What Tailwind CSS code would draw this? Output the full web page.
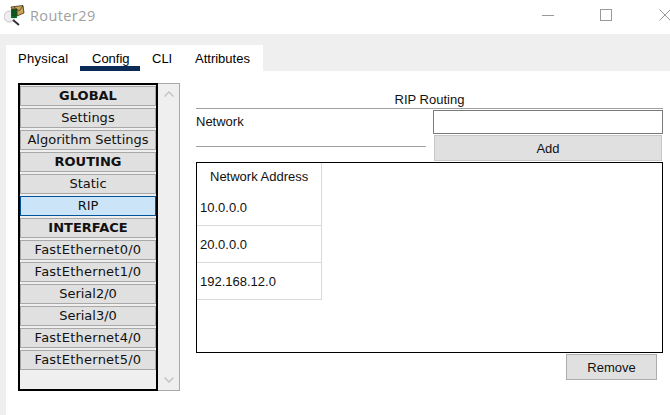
<!DOCTYPE html>
<html lang="en">
<head>
    <meta charset="UTF-8">
    <title>Router29</title>
    <script src="https://cdn.jsdelivr.net/npm/@tailwindcss/browser@4"></script>
</head>
<body class="bg-white w-[670px] h-[415px] overflow-hidden font-['Liberation_Sans',sans-serif] text-[13px] text-black">

    <!-- Title bar -->
    <div class="h-[34px] pb-[4px] flex items-center bg-white">
        <svg class="ml-[4px] w-[22px] h-[24px]" viewBox="0 0 22 24">
            <circle cx="5.500" cy="13.500" r="5.500" fill="#eeeeee" stroke="#c4c4c4"/>
            <path d="M9 17 L15 22" stroke="#333" stroke-width="2"/>
            <rect x="7" y="6" width="6" height="9" fill="#0f7a2c"/>
            <path d="M7 8h6M7 10h6M7 12h6M9 6v9M11 6v9" stroke="#0a3d16" stroke-width="0.700"/>
            <path d="M7 4 L19 2.500 L20 10 L13 13 L13 6 L8 6 Z" fill="#c9a55a" stroke="#3a2c10" stroke-width="0.800"/>
            <path d="M10 4 L15 8 L19 3" stroke="#3a2c10" stroke-width="0.700" fill="none"/>
        </svg>
        <span class="ml-[4px] mt-[1px] font-['Open_Sans',sans-serif] text-[14.500px] tracking-[0.4px] text-[#a0a0a0]">Router29</span>
        <div class="ml-auto flex items-center">
            <div class="w-[12px] h-px bg-[#999]"></div>
            <div class="ml-[46px] w-[12px] h-[12px] border border-[#999]"></div>
            <svg class="ml-[47px] w-[12px] h-[12px] mr-[-1px]" viewBox="0 0 12 12"><path d="M0.500 0.500 L11.500 11.500 M11.500 0.500 L0.500 11.500" stroke="#999" fill="none"/></svg>
        </div>
    </div>

    <div class="bg-[#efefef] pt-[11px] pl-[6px] h-[381px]">
        <!-- Tabs -->
        <div class="bg-white w-[257px] h-[26px] pt-[1px] flex items-center relative">
            <span class="ml-[12px] w-[74px] tracking-[0.25px]">Physical</span>
            <span class="w-[60px]">Config</span>
            <span class="w-[43px]">CLI</span>
            <span>Attributes</span>
            <div class="absolute left-[74px] top-[21px] w-[60px] h-[5px] bg-[#0b2a55]"></div>
        </div>

        <div class="bg-white h-[344px] flex">
            <!-- Side list -->
            <div class="ml-[12px] mt-[12px] w-[162px] h-[308px] flex">
                <div class="w-[140px] h-full border-2 border-black bg-[#efefef] pt-[1px] font-['DejaVu_Sans',sans-serif] text-[13px] text-[#111] flex flex-col gap-[2px]">
                    <div class="w-[136px] h-[20px] shrink-0 flex items-center justify-center bg-[#e0e0e0] border border-[#a8a8a8] font-bold">GLOBAL</div>
                    <div class="w-[136px] h-[20px] shrink-0 flex items-center justify-center bg-[#e0e0e0] border border-[#a8a8a8]">Settings</div>
                    <div class="w-[136px] h-[20px] shrink-0 flex items-center justify-center bg-[#e0e0e0] border border-[#a8a8a8]">Algorithm Settings</div>
                    <div class="w-[136px] h-[20px] shrink-0 flex items-center justify-center bg-[#e0e0e0] border border-[#a8a8a8] font-bold">ROUTING</div>
                    <div class="w-[136px] h-[20px] shrink-0 flex items-center justify-center bg-[#e0e0e0] border border-[#a8a8a8]">Static</div>
                    <div class="w-[136px] h-[20px] shrink-0 flex items-center justify-center bg-[#cce4f7] border border-[#005499]">RIP</div>
                    <div class="w-[136px] h-[20px] shrink-0 flex items-center justify-center bg-[#e0e0e0] border border-[#a8a8a8] font-bold">INTERFACE</div>
                    <div class="w-[136px] h-[20px] shrink-0 flex items-center justify-center bg-[#e0e0e0] border border-[#a8a8a8] tracking-[0.25px]">FastEthernet0/0</div>
                    <div class="w-[136px] h-[20px] shrink-0 flex items-center justify-center bg-[#e0e0e0] border border-[#a8a8a8] tracking-[0.25px]">FastEthernet1/0</div>
                    <div class="w-[136px] h-[20px] shrink-0 flex items-center justify-center bg-[#e0e0e0] border border-[#a8a8a8]">Serial2/0</div>
                    <div class="w-[136px] h-[20px] shrink-0 flex items-center justify-center bg-[#e0e0e0] border border-[#a8a8a8]">Serial3/0</div>
                    <div class="w-[136px] h-[20px] shrink-0 flex items-center justify-center bg-[#e0e0e0] border border-[#a8a8a8] tracking-[0.25px]">FastEthernet4/0</div>
                    <div class="w-[136px] h-[20px] shrink-0 flex items-center justify-center bg-[#e0e0e0] border border-[#a8a8a8] tracking-[0.25px]">FastEthernet5/0</div>
                </div>
                <!-- Scrollbar -->
                <div class="w-[22px] h-full bg-[#efefef] border border-l-0 border-[#a8a8a8] flex flex-col justify-between items-center py-[7px]">
                    <svg class="w-[10px] h-[6px]" viewBox="0 0 10 6"><path d="M0.500 5.500 L5 1 L9.500 5.500" stroke="#c4c4c4" stroke-width="1.500" fill="none"/></svg>
                    <svg class="w-[10px] h-[6px]" viewBox="0 0 10 6"><path d="M0.500 0.500 L5 5 L9.500 0.500" stroke="#c4c4c4" stroke-width="1.500" fill="none"/></svg>
                </div>
            </div>

            <!-- RIP form -->
            <div class="ml-[16px] w-[467px] pt-[22px] text-[#111]">
                <div class="h-[16px] leading-[14px] text-center border-b border-[#a0a0a0]">RIP Routing</div>
                <div class="flex h-[53px]">
                    <div class="w-[230px]">
                        <div class="h-[21px] mt-[4px] leading-[18px]">Network</div>
                        <div class="h-px mt-[12px] bg-[#a0a0a0]"></div>
                    </div>
                    <div class="ml-[7px] w-[230px] pt-[1px]">
                        <div class="h-[24px] border border-[#7a7a7a] bg-white"></div>
                        <div class="ml-[1px] mt-[1px] w-[228px] h-[26px] pt-[1px] flex items-center justify-center bg-[#e0e0e0] border border-[#c8c8c8]">Add</div>
                    </div>
                </div>
                <!-- Network table -->
                <div class="h-[191px] border border-black bg-white">
                    <div class="w-[125px] border-r border-[#d9d9d9]">
                        <div class="h-[26px] pl-[13px] leading-[28px]">Network Address</div>
                        <div class="h-[37px] pl-[3px] leading-[38px] border-b border-[#d9d9d9]">10.0.0.0</div>
                        <div class="h-[37px] pl-[3px] leading-[38px] border-b border-[#d9d9d9]">20.0.0.0</div>
                        <div class="h-[37px] pl-[3px] leading-[38px] border-b border-[#d9d9d9]">192.168.12.0</div>
                    </div>
                </div>
                <div class="flex justify-end pr-[6px] mt-[1px]">
                    <div class="w-[91px] h-[26px] pt-[1px] flex items-center justify-center bg-[#e0e0e0] border border-[#adadad]">Remove</div>
                </div>
            </div>
        </div>
    </div>

</body>
</html>
